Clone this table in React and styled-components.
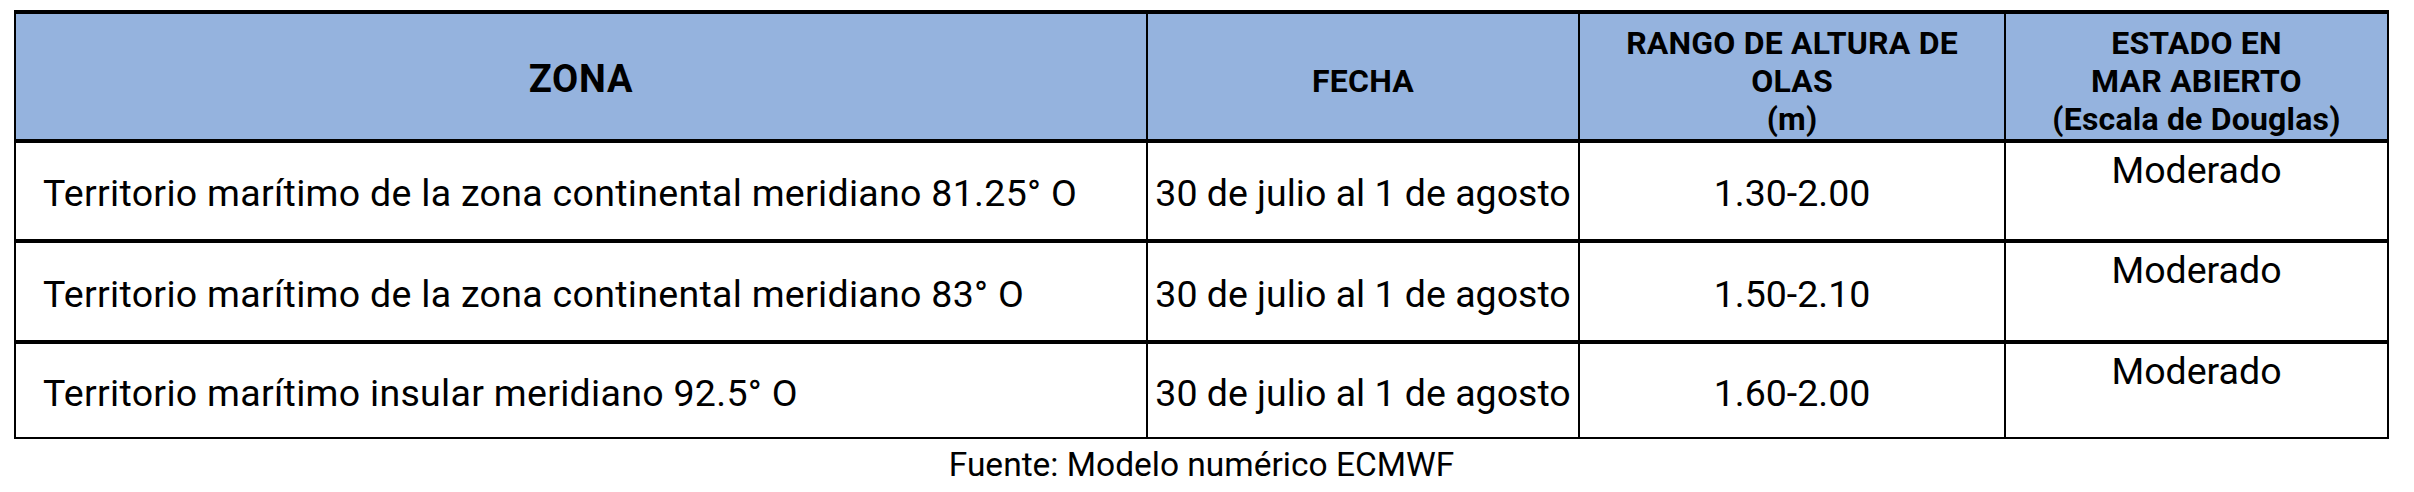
import React from "react";
import styled, { createGlobalStyle } from "styled-components";

const GlobalStyle = createGlobalStyle`
  html, body {
    margin: 0;
    padding: 0;
    background: #fff;
  }
  body {
    font-family: Roboto, "Liberation Sans", sans-serif;
    color: #000;
  }
`;

const Page = styled.div`
  width: 2414px;
  height: 492px;
  padding: 10px 0 0 14px;
  box-sizing: border-box;
`;

const Table = styled.div`
  display: grid;
  grid-template-columns: 1130px 430px 424px 381px;
  grid-template-rows: 125px 96px 97px 93px;
  gap: 4px 2px;
  width: 2375px;
  background: #000;
  border: 2px solid #000;
  border-top-width: 4px;
  box-sizing: border-box;
`;

const HeadCell = styled.div`
  background: #95b3de;
  display: flex;
  flex-direction: column;
  align-items: center;
  justify-content: center;
  padding-top: ${(p) => (p.$big ? "4px" : "8px")};
  font-weight: 700;
  font-size: ${(p) => (p.$big ? "38px" : "32px")};
  line-height: 38px;
  text-align: center;
  white-space: nowrap;
  letter-spacing: ${(p) => (p.$big ? "0.8px" : "0.2px")};
`;

const Cell = styled.div`
  background: #fff;
  display: flex;
  align-items: ${(p) => (p.$top ? "flex-start" : "center")};
  justify-content: ${(p) => (p.$left ? "flex-start" : "center")};
  padding-top: 5px;
  padding-left: ${(p) => (p.$left ? "27px" : "0")};
  font-size: 37.5px;
  line-height: 45px;
  letter-spacing: ${(p) => (p.$left ? "0.3px" : "0")};
  white-space: nowrap;
`;

const Caption = styled.div`
  width: 2375px;
  padding-top: 6px;
  text-align: center;
  font-size: 33.5px;
  line-height: 40px;
`;

const rows = [
  {
    zona: "Territorio marítimo de la zona continental meridiano 81.25° O",
    fecha: "30 de julio al 1 de agosto",
    rango: "1.30-2.00",
    estado: "Moderado",
  },
  {
    zona: "Territorio marítimo de la zona continental meridiano 83° O",
    fecha: "30 de julio al 1 de agosto",
    rango: "1.50-2.10",
    estado: "Moderado",
  },
  {
    zona: "Territorio marítimo insular meridiano 92.5° O",
    fecha: "30 de julio al 1 de agosto",
    rango: "1.60-2.00",
    estado: "Moderado",
  },
];

export default function App() {
  return (
    <>
      <GlobalStyle />
      <Page>
        <Table>
          <HeadCell $big>ZONA</HeadCell>
          <HeadCell>FECHA</HeadCell>
          <HeadCell>
            <span>RANGO DE ALTURA DE</span>
            <span>OLAS</span>
            <span>(m)</span>
          </HeadCell>
          <HeadCell>
            <span>ESTADO EN</span>
            <span>MAR ABIERTO</span>
            <span>(Escala de Douglas)</span>
          </HeadCell>
          {rows.map((r) => (
            <React.Fragment key={r.zona}>
              <Cell $left>{r.zona}</Cell>
              <Cell>{r.fecha}</Cell>
              <Cell>{r.rango}</Cell>
              <Cell $top>{r.estado}</Cell>
            </React.Fragment>
          ))}
        </Table>
        <Caption>Fuente: Modelo numérico ECMWF</Caption>
      </Page>
    </>
  );
}
